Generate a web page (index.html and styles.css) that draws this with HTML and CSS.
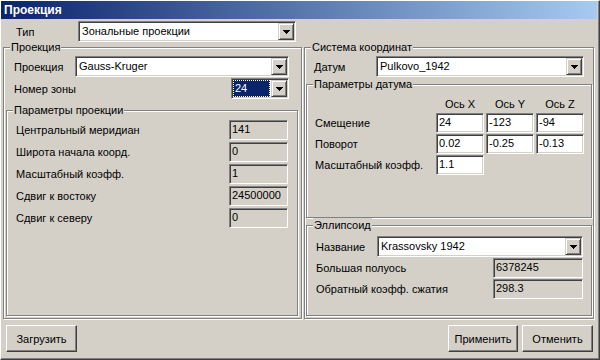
FILE: index.html
```html
<!DOCTYPE html>
<html lang="ru">
<head>
    <meta charset="UTF-8">
    <meta name="viewport" content="width=device-width, initial-scale=1.0">
    <title>Проекция</title>
    <link rel="stylesheet" href="styles.css">
</head>
<body>
    <div class="window">
        <div class="titlebar">Проекция</div>
        <div class="content">
            <div class="type-row">
                <span class="type-label">Тип</span>
                <div class="combo combo-type">
                    <span class="combo-text">Зональные проекции</span>
                    <span class="combo-btn"><svg width="7" height="4" viewBox="0 0 7 4"><path d="M0 0h7v1H0zM1 1h5v1H1zM2 2h3v1H2zM3 3h1v1H3z"/></svg></span>
                </div>
            </div>

            <div class="columns">
                <fieldset class="group group-proj">
                    <legend>Проекция</legend>
                    <div class="row row-proj">
                        <span>Проекция</span>
                        <div class="combo combo-proj">
                            <span class="combo-text">Gauss-Kruger</span>
                            <span class="combo-btn"><svg width="7" height="4" viewBox="0 0 7 4"><path d="M0 0h7v1H0zM1 1h5v1H1zM2 2h3v1H2zM3 3h1v1H3z"/></svg></span>
                        </div>
                    </div>
                    <div class="row row-zone">
                        <span>Номер зоны</span>
                        <div class="combo combo-zone">
                            <span class="combo-text"><span class="selected">24</span></span>
                            <span class="combo-btn"><svg width="7" height="4" viewBox="0 0 7 4"><path d="M0 0h7v1H0zM1 1h5v1H1zM2 2h3v1H2zM3 3h1v1H3z"/></svg></span>
                        </div>
                    </div>

                    <fieldset class="group group-params">
                        <legend>Параметры проекции</legend>
                        <div class="param-row">
                            <span>Центральный меридиан</span>
                            <span class="edit readonly">141</span>
                        </div>
                        <div class="param-row">
                            <span>Широта начала коорд.</span>
                            <span class="edit readonly">0</span>
                        </div>
                        <div class="param-row">
                            <span>Масштабный коэфф.</span>
                            <span class="edit readonly">1</span>
                        </div>
                        <div class="param-row">
                            <span>Сдвиг к востоку</span>
                            <span class="edit readonly">24500000</span>
                        </div>
                        <div class="param-row">
                            <span>Сдвиг к северу</span>
                            <span class="edit readonly">0</span>
                        </div>
                    </fieldset>
                </fieldset>

                <fieldset class="group group-coord">
                    <legend>Система координат</legend>
                    <div class="row row-datum">
                        <span>Датум</span>
                        <div class="combo combo-datum">
                            <span class="combo-text">Pulkovo_1942</span>
                            <span class="combo-btn"><svg width="7" height="4" viewBox="0 0 7 4"><path d="M0 0h7v1H0zM1 1h5v1H1zM2 2h3v1H2zM3 3h1v1H3z"/></svg></span>
                        </div>
                    </div>

                    <fieldset class="group group-datum">
                        <legend>Параметры датума</legend>
                        <div class="datum-grid">
                            <span></span>
                            <span class="axis">Ось X</span>
                            <span class="axis">Ось Y</span>
                            <span class="axis">Ось Z</span>

                            <span class="grid-label">Смещение</span>
                            <span class="edit">24</span>
                            <span class="edit">-123</span>
                            <span class="edit">-94</span>

                            <span class="grid-label">Поворот</span>
                            <span class="edit">0.02</span>
                            <span class="edit">-0.25</span>
                            <span class="edit">-0.13</span>

                            <span class="grid-label">Масштабный коэфф.</span>
                            <span class="edit">1.1</span>
                        </div>
                    </fieldset>

                    <fieldset class="group group-ellipsoid">
                        <legend>Эллипсоид</legend>
                        <div class="row row-name">
                            <span>Название</span>
                            <div class="combo combo-name">
                                <span class="combo-text">Krassovsky 1942</span>
                                <span class="combo-btn"><svg width="7" height="4" viewBox="0 0 7 4"><path d="M0 0h7v1H0zM1 1h5v1H1zM2 2h3v1H2zM3 3h1v1H3z"/></svg></span>
                            </div>
                        </div>
                        <div class="row ell-row">
                            <span>Большая полуось</span>
                            <span class="edit readonly ell-edit">6378245</span>
                        </div>
                        <div class="row ell-row">
                            <span>Обратный коэфф. сжатия</span>
                            <span class="edit readonly ell-edit">298.3</span>
                        </div>
                    </fieldset>
                </fieldset>
            </div>

            <div class="buttons">
                <button class="btn btn-load">Загрузить</button>
                <button class="btn btn-apply">Применить</button>
                <button class="btn">Отменить</button>
            </div>
        </div>
    </div>
</body>
</html>
```

FILE: styles.css
```css
body {
    margin: 0;
    font-family: "Liberation Sans", Arial, sans-serif;
    font-size: 11px;
    color: #000;
    background-color: #d4d0c8;
}

.window {
    width: 600px;
    height: 360px;
    box-sizing: border-box;
    display: flex;
    flex-direction: column;
    background-color: #d4d0c8;
    border: 1px solid;
    border-color: #fff #404040 #404040 #fff;
    box-shadow: inset -1px -1px #808080;
    padding: 0 2px 2px 0;
}

.titlebar {
    height: 18px;
    line-height: 18px;
    padding-left: 3px;
    color: #fff;
    font-size: 12px;
    font-weight: bold;
    background: linear-gradient(to right, #0a246a, #a6caf0);
}

.content {
    flex: 1;
    min-height: 0;
    display: flex;
    flex-direction: column;
}

.type-row {
    display: flex;
    align-items: center;
    height: 21px;
    margin-top: 2px;
    padding-left: 15px;
}

.type-label {
    width: 62px;
}

/* combo box */
.combo {
    height: 21px;
    box-sizing: border-box;
    display: flex;
    padding: 1px;
    background-color: #fff;
    border: 1px solid;
    border-color: #808080 #fff #fff #808080;
    box-shadow: inset 1px 1px #404040, inset -1px -1px #d4d0c8;
}

.combo-text {
    flex: 1;
    min-width: 0;
    line-height: 17px;
    padding-left: 2px;
    white-space: nowrap;
    overflow: hidden;
}

.combo-btn {
    width: 16px;
    height: 17px;
    box-sizing: border-box;
    display: flex;
    align-items: center;
    justify-content: center;
    background-color: #d4d0c8;
    border: 1px solid;
    border-color: #d4d0c8 #404040 #404040 #d4d0c8;
    box-shadow: inset 1px 1px #fff, inset -1px -1px #808080;
}

.combo-type { width: 218px; }
.combo-proj { width: 214px; }
.combo-zone { width: 58px; }
.combo-datum { width: 208px; }
.combo-name { width: 206px; }

.combo-zone .combo-text {
    padding: 0 1px 0 0;
}

.selected {
    display: block;
    height: 17px;
    box-sizing: border-box;
    line-height: 15px;
    padding-left: 1px;
    color: #fff;
    background-color: #0a246a;
    border: 1px dotted #fffbe0;
}

/* group box */
.group {
    margin: 0;
    padding: 0;
    min-width: 0;
    display: flex;
    flex-direction: column;
    border: 1px solid #808080;
    box-shadow: inset 1px 1px #fff, 1px 1px #fff;
}

.group legend {
    margin-left: 6px;
    padding: 0 1px;
    line-height: 14px;
    background-color: #d4d0c8;
}

.columns {
    flex: 1;
    min-height: 0;
    display: grid;
    grid-template-columns: 299px 290px;
    column-gap: 2px;
    margin: -2px 0 0 2px;
}

.row {
    display: flex;
    align-items: center;
    justify-content: space-between;
}

.row-proj {
    height: 21px;
    margin-top: 2px;
    padding: 0 12px 0 10px;
}

.row-zone {
    height: 21px;
    margin-top: 1px;
    padding: 0 12px 0 10px;
}

.group-params {
    flex: 1;
    margin: 4px 3px 2px 2px;
}

.param-row {
    display: flex;
    align-items: center;
    justify-content: space-between;
    height: 20px;
    margin-top: 2px;
    padding: 0 9px;
}

.param-row:first-of-type {
    margin-top: 3px;
}

/* edit box */
.edit {
    height: 20px;
    box-sizing: border-box;
    line-height: 16px;
    padding-left: 2px;
    white-space: nowrap;
    background-color: #fff;
    border: 1px solid;
    border-color: #808080 #fff #fff #808080;
    box-shadow: inset 1px 1px #404040, inset -1px -1px #d4d0c8;
}

.readonly {
    background-color: #d4d0c8;
}

.param-row .edit {
    width: 59px;
}

.row-datum {
    height: 21px;
    margin-top: 2px;
    padding: 0 9px;
}

.group-datum {
    flex: 1;
    margin: 0 1px;
}

.datum-grid {
    display: grid;
    grid-template-columns: 119px repeat(3, 48px);
    grid-template-rows: 16px repeat(3, 20px);
    column-gap: 2px;
    row-gap: 1px;
    padding: 5px 0 0 8px;
}

.axis {
    text-align: center;
    line-height: 16px;
}

.grid-label {
    line-height: 20px;
}

.group-ellipsoid {
    height: 98px;
    box-sizing: border-box;
    margin: 0 1px 2px;
}

.row-name {
    height: 21px;
    margin-top: 4px;
    padding: 0 8px 0 9px;
}

.ell-row {
    height: 20px;
    margin-top: 1px;
    padding: 0 8px 0 9px;
}

.ell-edit {
    width: 90px;
}

.buttons {
    display: flex;
    gap: 4px;
    height: 27px;
    margin: 6px 4px 5px 5px;
}

.btn {
    width: 71px;
    height: 27px;
    padding: 0;
    font: inherit;
    color: #000;
    background-color: #d4d0c8;
    border: 1px solid;
    border-color: #fff #404040 #404040 #fff;
    box-shadow: inset -1px -1px #808080;
}

.btn-load {
    margin-right: auto;
}

.btn-apply {
    width: 70px;
}
```
